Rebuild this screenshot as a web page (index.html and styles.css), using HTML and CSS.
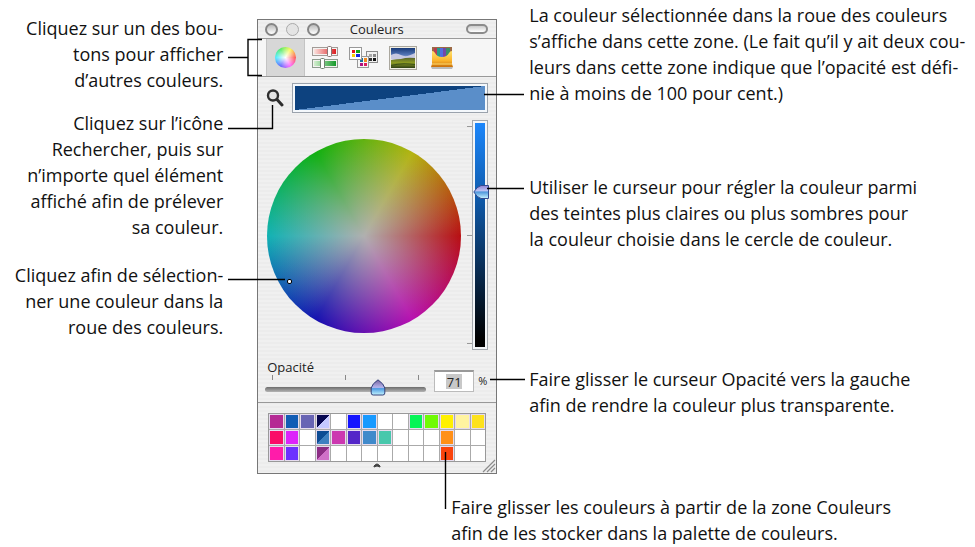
FILE: index.html
```html
<!DOCTYPE html>
<html lang="fr">
<head>
    <meta charset="UTF-8">
    <meta name="viewport" content="width=device-width, initial-scale=1.0">
    <title>Couleurs</title>
    <link rel="stylesheet" href="styles.css">
</head>
<body>
    <main class="figure">
        <div class="notes notes-left">
            <p>Cliquez sur un des bou-<br>tons pour afficher<br>d’autres couleurs.</p>
            <p class="note-search">Cliquez sur l’icône<br>Rechercher, puis sur<br>n’importe quel élément<br>affiché afin de prélever<br>sa couleur.</p>
            <p class="note-wheel">Cliquez afin de sélection-<br>ner une couleur dans la<br>roue des couleurs.</p>
        </div>

        <div class="stage">
            <section class="window">
                <header class="titlebar">
                    <div class="lights">
                        <button class="light" aria-label="Fermer"></button>
                        <button class="light light-off" aria-label="Réduire"></button>
                        <button class="light" aria-label="Agrandir"></button>
                    </div>
                    <h1>Couleurs</h1>
                    <button class="pill" aria-label="Barre d’outils"></button>
                </header>

                <nav class="toolbar">
                    <button class="tool active" aria-label="Roue"><span class="mini-wheel"></span></button>
                    <button class="tool" aria-label="Curseurs">
                        <svg width="28" height="24" viewBox="0 0 28 24">
                            <defs>
                                <linearGradient id="red"><stop offset="0" stop-color="#fbe3df"/><stop offset="1" stop-color="#dc1f22"/></linearGradient>
                                <linearGradient id="green"><stop offset="0" stop-color="#d5efd0"/><stop offset="1" stop-color="#159a2a"/></linearGradient>
                            </defs>
                            <rect x="1.5" y="1.5" width="25" height="8" fill="#f4f2f0" stroke="#a29b97"/>
                            <rect x="3" y="3" width="22" height="5" fill="url(#red)"/>
                            <rect x="1.5" y="13.5" width="25" height="8" fill="#f4f2f0" stroke="#8d9a8d"/>
                            <rect x="3" y="15" width="22" height="5" fill="url(#green)"/>
                            <rect x="16.5" y=".5" width="4" height="10" rx="1" fill="#fff" stroke="#8b7775"/>
                            <rect x="9.5" y="12.5" width="4" height="10" rx="1" fill="#fff" stroke="#6f8170"/>
                        </svg>
                    </button>
                    <button class="tool" aria-label="Palettes">
                        <svg width="30" height="24" viewBox="0 0 30 24">
                            <rect x="17.5" y="5.5" width="11" height="11" fill="#f1f1f1" stroke="#8a8a8a"/>
                            <path d="M20 8h3v3h-3z" fill="#aaa"/><path d="M24 8h3v3h-3z" fill="#888"/><path d="M20 12h3v3h-3z" fill="#333"/><path d="M24 12h3v3h-3z" fill="#111"/>
                            <rect x="8.5" y="10.5" width="11" height="11" fill="#f6f6f6" stroke="#999"/>
                            <path d="M11 12h3v4h-3z" fill="#1a6f9c"/><path d="M15 12h3v4h-3z" fill="#f08a20"/><path d="M11 17h3v3h-3z" fill="#b0127e"/><path d="M15 17h3v3h-3z" fill="#dd1a5e"/>
                            <rect x=".5" y="1.5" width="12" height="12" fill="#fff" stroke="#999"/>
                            <path d="M3 4h3v3H3z" fill="#e3161c"/><path d="M7 4h4v3H7z" fill="#12a516"/><path d="M3 8h3v3H3z" fill="#f5d000"/><path d="M7 8h4v3H7z" fill="#1525e0"/>
                        </svg>
                    </button>
                    <button class="tool" aria-label="Images">
                        <svg width="30" height="24" viewBox="0 0 30 24">
                            <defs>
                                <linearGradient id="sky" x2="0" y2="1"><stop offset="0" stop-color="#183a78"/><stop offset=".35" stop-color="#5577b8"/><stop offset=".6" stop-color="#f0eef5"/></linearGradient>
                                <linearGradient id="field" x2="0" y2="1"><stop offset="0" stop-color="#58632a"/><stop offset=".5" stop-color="#8e9c22"/><stop offset="1" stop-color="#2e3f16"/></linearGradient>
                            </defs>
                            <rect x="1.5" y=".5" width="27" height="23" fill="#f2efe4" stroke="#aaa79e"/>
                            <rect x="3" y="2" width="24" height="20" fill="url(#sky)"/>
                            <path d="M3 9q5-3 10 0t14-2v6H3z" fill="#c6c8e2"/>
                            <path d="M3 14q6-1 10-1 6-2 14-1v10H3z" fill="url(#field)"/>
                            <path d="M3 19q9-3 24-1v1q-13-2-24 1z" fill="#3e5219"/>
                        </svg>
                    </button>
                    <button class="tool" aria-label="Crayons">
                        <svg width="24" height="24" viewBox="0 0 24 24">
                            <defs>
                                <linearGradient id="box" x2="0" y2="1"><stop offset="0" stop-color="#ffe26d"/><stop offset=".6" stop-color="#fbb42c"/><stop offset="1" stop-color="#c86f0c"/></linearGradient>
                            </defs>
                            <path d="M1 21h22l-1 2H2z" fill="#bbb"/>
                            <path d="M2 1h20v19H2z" fill="#9c6a45"/>
                            <path d="M4 2h3v8H4z" fill="#b63c54"/><path d="M7 2h3v9H7z" fill="#269b8a"/><path d="M10 2h3v10h-3z" fill="#526ee0"/><path d="M13 2h3v9h-3z" fill="#7447a9"/><path d="M16 2h4v8h-4z" fill="#3c8e69"/>
                            <path d="M2 5q2 0 3 2 2 4 7 4t7-4q1-2 3-2v13l1 3H1l1-3z" fill="url(#box)"/>
                            <path d="M2 18h20" stroke="#ffdb70"/>
                        </svg>
                    </button>
                </nav>

                <div class="current">
                    <button class="search" aria-label="Rechercher">
                        <svg width="18" height="20" viewBox="0 0 18 20">
                            <circle cx="7" cy="7.5" r="5" fill="#e4e4e4" stroke="#2e2e2e" stroke-width="2.4"/>
                            <path d="M11 11.5l5 5.5" stroke="#2e2e2e" stroke-width="3" stroke-linecap="round"/>
                        </svg>
                    </button>
                    <div class="swatch"></div>
                </div>

                <div class="picker">
                    <div class="wheel"><span class="pin"></span></div>
                    <div class="brightness">
                        <div class="ticks-v"><i></i><i></i><i></i></div>
                        <div class="bar">
                            <input type="range" aria-label="Luminosité" min="0" max="100" value="69">
                            <svg class="thumb-v" style="top: 31%" width="16" height="15" viewBox="0 0 16 15">
                                <defs>
                                    <linearGradient id="drop" x2="0" y2="1"><stop offset="0" stop-color="#8c82d4"/><stop offset=".4" stop-color="#bcc2f4"/><stop offset=".5" stop-color="#4f97dc"/><stop offset="1" stop-color="#c9f4ff"/></linearGradient>
                                </defs>
                                <path d="M15.5 1v13H8Q4 13 .8 7.5 4 2 8 1z" fill="url(#drop)" stroke="#354a8e"/>
                            </svg>
                        </div>
                    </div>
                </div>

                <div class="opacity">
                    <div class="opacity-slider">
                        <label for="opacity">Opacité</label>
                        <div class="ticks-h"><i></i><i></i><i></i></div>
                        <div class="track">
                            <input type="range" id="opacity" min="0" max="100" value="71">
                            <svg class="thumb-h" style="left: 70%" width="16" height="17" viewBox="0 0 16 17">
                                <defs>
                                    <linearGradient id="drop2" x2="0" y2="1"><stop offset="0" stop-color="#76639f"/><stop offset=".5" stop-color="#b6b4ec"/><stop offset=".58" stop-color="#4d9be2"/><stop offset="1" stop-color="#c4f5ff"/></linearGradient>
                                </defs>
                                <path d="M8 .8Q14 5 14.8 9v5q0 2-2 2H3.2q-2 0-2-2V9Q2 5 8 .8z" fill="url(#drop2)" stroke="#34437d"/>
                            </svg>
                        </div>
                    </div>
                    <input type="text" class="percent" id="percent" value="71" aria-label="Opacité en pour cent">
                    <label class="unit" for="percent">%</label>
                </div>

                <div class="stock">
                    <div class="palette">
                        <span class="cell c-plum"></span><span class="cell c-blue"></span><span class="cell c-slate"></span><span class="cell c-navy"></span><span class="cell"></span><span class="cell c-pure"></span><span class="cell c-sky"></span><span class="cell"></span><span class="cell"></span><span class="cell c-green"></span><span class="cell c-lime"></span><span class="cell c-yellow"></span><span class="cell c-cream"></span><span class="cell c-gold"></span>
                        <span class="cell c-rose"></span><span class="cell c-magenta"></span><span class="cell"></span><span class="cell c-steel"></span><span class="cell c-orchid"></span><span class="cell c-violet"></span><span class="cell c-denim"></span><span class="cell c-teal"></span><span class="cell"></span><span class="cell"></span><span class="cell"></span><span class="cell c-orange"></span><span class="cell"></span><span class="cell"></span>
                        <span class="cell c-pink"></span><span class="cell c-purple"></span><span class="cell"></span><span class="cell c-mauve"></span><span class="cell"></span><span class="cell"></span><span class="cell"></span><span class="cell"></span><span class="cell"></span><span class="cell"></span><span class="cell"></span><span class="cell c-red"></span><span class="cell"></span><span class="cell"></span>
                    </div>
                    <svg class="handle" width="8" height="5" viewBox="0 0 8 5"><path d="M1 4V3q3-4 6 0v1L4 3z" fill="#444" stroke="#444"/></svg>
                    <svg class="grip" width="14" height="14" viewBox="0 0 14 14"><path d="M1 13L13 1M5 13l8-8M9 13l4-4" stroke="#8b8b8b" stroke-width="1.2"/></svg>
                </div>
            </section>

            <!-- leader lines, drawn over the window -->
            <svg class="leaders" width="300" height="494" viewBox="228 19 300 494">
                <path d="M228 57.5h20M262 39.5h-14v36h14M228 128.5h44.5V105M228 279.5h57M484 94.5h40M487 188.5h37M490 379.5h35M445.5 452v57"/>
            </svg>
        </div>

        <div class="notes notes-right">
            <p>La couleur sélectionnée dans la roue des couleurs<br>s’affiche dans cette zone. (Le fait qu’il y ait deux cou-<br>leurs dans cette zone indique que l’opacité est défi-<br>nie à moins de 100 pour cent.)</p>
            <p class="note-slider">Utiliser le curseur pour régler la couleur parmi<br>des teintes plus claires ou plus sombres pour<br>la couleur choisie dans le cercle de couleur.</p>
            <p class="note-opacity">Faire glisser le curseur Opacité vers la gauche<br>afin de rendre la couleur plus transparente.</p>
        </div>

        <p class="notes note-stock">Faire glisser les couleurs à partir de la zone Couleurs<br>afin de les stocker dans la palette de couleurs.</p>
    </main>
</body>
</html>
```

FILE: styles.css
```css
* {
    margin: 0;
    padding: 0;
    box-sizing: border-box;
}

body {
    background: #fff;
    color: #111;
    font-family: "Open Sans", "Noto Sans", sans-serif;
}

button {
    background: none;
    border: none;
}

svg {
    display: block;
}

.figure {
    display: grid;
    grid-template-columns: minmax(0, 35fr) 240px minmax(0, 65fr);
    align-items: start;
}

/* captions */
.notes {
    font-size: 18px;
    line-height: 26px;
    white-space: nowrap;
}

.notes-left {
    display: flex;
    flex-direction: column;
    align-items: flex-end;
    padding: 15px 34px 0 0;
    text-align: right;
}

.note-search {
    margin-top: 17px;
}

.note-wheel {
    margin-top: 22px;
}

.notes-right {
    padding: 2px 0 0 32px;
}

.note-slider {
    margin-top: 68px;
}

.note-opacity {
    margin-top: 114px;
}

.note-stock {
    grid-column: 2 / 4;
    padding: 20px 0 0 194px;
}

/* window */
.stage {
    position: relative;
    padding-top: 19px;
}

.leaders {
    position: absolute;
    top: 19px;
    left: -29px;
    fill: none;
    stroke: #000;
    stroke-width: 1.4px;
    pointer-events: none;
}

.window {
    border: 1px solid #777;
    background: repeating-linear-gradient(#f0f0f0 0 2px, #ececec 2px 4px);
    color: #222;
}

.titlebar {
    display: grid;
    grid-template-columns: 1fr auto 1fr;
    align-items: center;
    height: 19px;
    padding: 0 8px 0 7px;
    border-bottom: 1px solid #999;
}

.titlebar h1 {
    font-size: 13px;
    line-height: 18px;
    font-weight: 500;
}

.lights {
    display: flex;
    gap: 8px;
}

.light {
    width: 13px;
    height: 13px;
    border: 2px solid #858585;
    border-radius: 50%;
    background: linear-gradient(#bbb, #fff);
}

.light-off {
    border: 1px solid #aaa;
    background: #e4e4e4;
}

.pill {
    justify-self: end;
    width: 22px;
    height: 10px;
    border: 2px solid #8b8b8b;
    border-radius: 5px;
    background: linear-gradient(#ccc, #fff);
}

.toolbar {
    display: flex;
    height: 38px;
    padding-left: 8px;
    border-bottom: 1px solid #999;
    background: #f6f6f6;
}

.tool {
    display: flex;
    align-items: center;
    justify-content: center;
    width: 39px;
}

.tool.active {
    background: #d7d7d7;
    border: 1px solid #c4c4c4;
    border-width: 0 1px;
}

.mini-wheel {
    width: 21px;
    height: 21px;
    border-radius: 50%;
    background:
        radial-gradient(closest-side, #fff, rgba(255, 255, 255, 0.1)),
        conic-gradient(from 90deg, #ff4038, #ff50ff, #4a50ff, #30e8ff, #38e848, #f8f840, #ff4038);
}

.current {
    display: flex;
    align-items: center;
    gap: 8px;
    padding: 6px 8px 0;
}

.search {
    width: 18px;
}

.swatch {
    flex: 1;
    height: 30px;
    padding: 2px;
    border: 1px solid #9aa2ac;
    background: linear-gradient(to bottom right, #0d427f 50%, #5a8ec9 50%) content-box, #f4f8fc;
}

.picker {
    display: flex;
    align-items: center;
    justify-content: space-between;
    padding: 7px 8px 0 9px;
}

.wheel {
    position: relative;
    width: 194px;
    height: 194px;
    margin-top: 2px;
    border-radius: 50%;
    background:
        radial-gradient(closest-side, #b0b0b0, rgba(176, 176, 176, 0)),
        conic-gradient(from 90deg, #b80e12, #b810b0, #1410b0, #10b2b4, #10b010, #b4b410, #b80e12);
}

.pin {
    position: absolute;
    left: 10%;
    top: 72%;
    width: 5px;
    height: 5px;
    border: 1px solid #000;
    border-radius: 2px;
    background: #fff;
}

.brightness {
    display: flex;
    height: 230px;
}

.ticks-v {
    display: flex;
    flex-direction: column;
    justify-content: space-between;
    width: 5px;
    padding: 6px 0;
}

.ticks-v i {
    height: 1px;
    background: #999;
}

.bar {
    position: relative;
    width: 16px;
    padding: 2px;
    border: 1px solid #a3a8ae;
    background: linear-gradient(#1b86fb, #0f5fb4 30%, #0a3462 60%, #000 97%) content-box, #f2f5f8;
}

.bar input {
    display: block;
    width: 100%;
    height: 100%;
    writing-mode: vertical-lr;
    direction: rtl;
}

input[type="range"] {
    appearance: none;
    background: transparent;
}

input[type="range"]::-webkit-slider-thumb {
    appearance: none;
    width: 16px;
    height: 16px;
    background: transparent;
}

.thumb-v {
    position: absolute;
    left: 0;
    transform: translateY(-50%);
    pointer-events: none;
}

.opacity {
    display: flex;
    align-items: flex-end;
    padding: 9px 7px 10px;
    border-bottom: 1px solid #999;
    font-size: 13px;
    line-height: 16px;
}

.opacity-slider {
    width: 161px;
}

.opacity-slider label {
    display: block;
    padding-left: 2px;
}

.ticks-h {
    display: flex;
    justify-content: space-between;
    padding: 0 7px 7px;
}

.ticks-h i {
    width: 1px;
    height: 5px;
    background: #888;
}

.track {
    position: relative;
    height: 5px;
    border-radius: 3px;
    background: linear-gradient(#6d6d6d, #b4b4b4);
}

.track input {
    display: block;
    width: 100%;
    height: 5px;
}

.thumb-h {
    position: absolute;
    bottom: -4px;
    transform: translateX(-50%);
    pointer-events: none;
}

.percent {
    width: 40px;
    height: 22px;
    margin-left: 8px;
    border: 1px solid #bbb;
    border-top: 2px solid #999;
    background: linear-gradient(#c8c8c8, #c8c8c8) center / 16px 15px no-repeat #fff;
    color: #222;
    font: 13px "Open Sans", "Noto Sans", sans-serif;
    text-align: center;
}

.unit {
    margin: 0 0 3px 4px;
    font-size: 11px;
}

/* stored colours */
.stock {
    position: relative;
    padding: 10px 10px 5px;
}

.palette {
    display: grid;
    grid-template-columns: repeat(14, 1fr);
    grid-auto-rows: 15px;
    gap: 1px;
    border: 1px solid #999;
    background: #aaa;
}

.cell {
    border: 1px solid #fff;
    background: #fff no-repeat padding-box;
}

.cell[class*="c-"] {
    border-color: #e6dcee;
}

.c-plum { background-color: #b52a94; }
.c-blue { background-color: #125db5; }
.c-slate { background-color: #6864b4; }
.c-navy { background-image: linear-gradient(to bottom right, #060650 50%, #c4c8ff 50%); }
.c-pure { background-color: #1414ff; }
.c-sky { background-color: #189aff; }
.c-green { background-color: #06f556; }
.c-lime { background-color: #70fa04; }
.c-yellow { background-color: #fff000; }
.c-cream { background-color: #fff3a0; }
.c-gold { background-color: #fde21c; }
.c-rose { background-color: #fa0c68; }
.c-magenta { background-color: #dc24fa; }
.c-steel { background-image: linear-gradient(to bottom right, #0d4c94 50%, #3f80c0 50%); }
.c-orchid { background-color: #cc38b0; }
.c-violet { background-color: #5426c8; }
.c-denim { background-color: #408acb; }
.c-teal { background-color: #48c8ac; }
.c-orange { background-color: #ff9018; }
.c-pink { background-color: #ff1caa; }
.c-purple { background-color: #6c30ff; }
.c-mauve { background-image: linear-gradient(to bottom right, #8c2c84 50%, #d070c8 50%); }
.c-red { background-color: #fa440c; }

.handle {
    margin: 1px auto 0;
}

.grip {
    position: absolute;
    right: 0;
    bottom: 0;
}
```
